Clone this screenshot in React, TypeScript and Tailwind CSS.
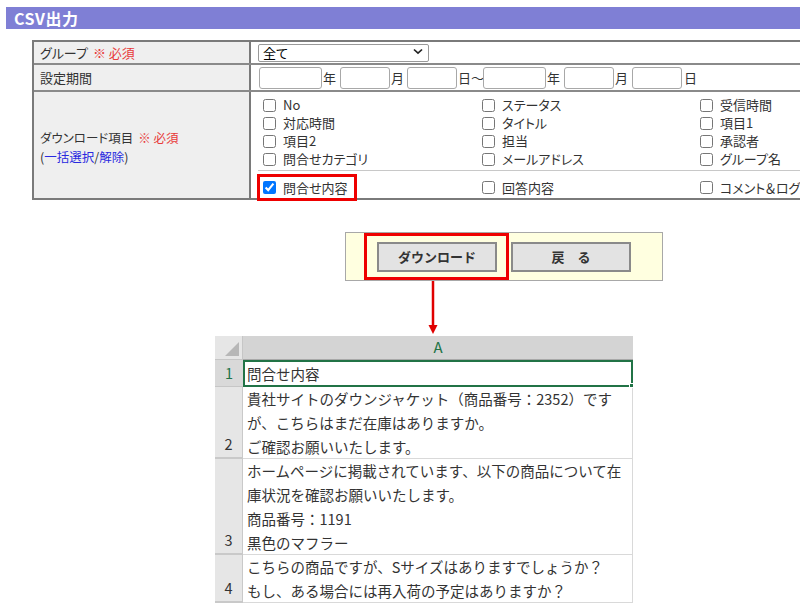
import React from 'react'

const jp = "font-['Noto_Sans_CJK_JP','Noto_Sans',sans-serif]"
const palt = "[font-feature-settings:'palt']"

const items = [
  ['No', 'ステータス', '受信時間'],
  ['対応時間', 'タイトル', '項目1'],
  ['項目2', '担当', '承認者'],
  ['問合せカテゴリ', 'メールアドレス', 'グループ名'],
]

const Check = ({ label, checked = false }: { label: string; checked?: boolean }) => (
  <label className="flex items-center h-[18px] text-[13px] text-[#333] whitespace-nowrap">
    <input type="checkbox" defaultChecked={checked} className="m-0 ml-[5px] mr-[7px] w-[13px] h-[13px] accent-[#0075ff]" />
    {label}
  </label>
)

const DateBox = ({ w }: { w: string }) => (
  <input type="text" className={`${w} h-[22px] border border-[#a8a8a8] rounded-[3px] bg-white`} />
)

const rows = [
  { n: '2', h: 'h-[72px]', lines: ['貴社サイトのダウンジャケット（商品番号：2352）です', 'が、こちらはまだ在庫はありますか。', 'ご確認お願いいたします。'] },
  { n: '3', h: 'h-[96px]', lines: ['ホームページに掲載されています、以下の商品について在', '庫状況を確認お願いいたします。', '商品番号：1191', '黒色のマフラー'] },
  { n: '4', h: 'h-[48px]', lines: ['こちらの商品ですが、Sサイズはありますでしょうか？', 'もし、ある場合には再入荷の予定はありますか？'] },
]

export default function App() {
  return (
    <div className={`w-[800px] h-[605px] overflow-hidden bg-white ${jp}`}>
      {/* title bar */}
      <div className="mt-[7px] ml-[6px] h-[22px] bg-[#7f7fd5] pl-[8px] flex items-center text-white font-bold text-[16px] tracking-[0.5px]">
        CSV出力
      </div>

      {/* form table */}
      <div className={`mt-[11px] ml-[32px] w-[790px] border-2 border-[#7a7a7a] text-[13px] text-[#333] ${palt}`}>
        <div className="flex h-[23px] border-b-2 border-[#8a8a8a]">
          <div className="w-[217px] shrink-0 bg-[#efefef] border-r-2 border-[#7a7a7a] pl-[6px] flex items-center">
            グループ<span className="ml-[5px] text-[#e83a3a]">※ 必須</span>
          </div>
          <div className="flex-1 pl-[7px] flex items-center">
            <div className="relative">
              <select className="appearance-none w-[171px] h-[18px] border border-[#999] rounded-[2px] pl-[4px] text-[13px] leading-[16px] bg-white text-black">
                <option>全て</option>
              </select>
              <svg className="absolute right-[6px] top-[5px] pointer-events-none" width="10" height="7" viewBox="0 0 10 7">
                <path d="M1 1.5 L5 5.2 L9 1.5" fill="none" stroke="#222" strokeWidth="1.7" />
              </svg>
            </div>
          </div>
        </div>
        <div className="flex h-[27px] border-b-2 border-[#8a8a8a]">
          <div className="w-[217px] shrink-0 bg-[#efefef] border-r-2 border-[#7a7a7a] pl-[6px] flex items-center">
            設定期間
          </div>
          <div className="flex-1 pl-[8px] flex items-center">
            <DateBox w="w-[63px]" /><span className="w-[18px] pl-[1px]">年</span>
            <DateBox w="w-[50px]" /><span className="w-[17px] pl-[1px]">月</span>
            <DateBox w="w-[50px]" /><span className="w-[26px] pl-[1px] whitespace-nowrap">日〜</span>
            <DateBox w="w-[63px]" /><span className="w-[18px] pl-[1px]">年</span>
            <DateBox w="w-[50px]" /><span className="w-[18px] pl-[1px]">月</span>
            <DateBox w="w-[50px]" /><span className="pl-[2px]">日</span>
          </div>
        </div>
        <div className="flex h-[106px]">
          <div className="w-[217px] shrink-0 bg-[#efefef] border-r-2 border-[#7a7a7a] pl-[6px] flex flex-col justify-center text-[12.5px] leading-[19px] pt-[4px]">
            <div>ダウンロード項目<span className="ml-[5px] text-[#e83a3a]">※ 必須</span></div>
            <div>(<span className="text-[#2a2ae0]">一括選択</span>/<span className="text-[#2a2ae0]">解除</span>)</div>
          </div>
          <div className="flex-1 pl-[7px] pt-[4px] flex flex-col">
            <div className="grid grid-cols-[219px_218px_200px]">
              {items.map((r) => r.map((t) => <Check key={t} label={t} />))}
            </div>
            <div className="mt-[2px] border-t border-[#c8c8c8] pt-[3px] grid grid-cols-[219px_218px_200px] items-center h-[30px]">
              <div className="w-[100px] h-[27px] border-[3px] border-[#ee0000] flex items-center -ml-[1px]">
                <label className="flex items-center text-[13px] text-[#333] whitespace-nowrap">
                  <input type="checkbox" defaultChecked className="m-0 ml-[3px] mr-[7px] w-[13px] h-[13px] accent-[#0075ff]" />
                  問合せ内容
                </label>
              </div>
              <Check label="回答内容" />
              <Check label="コメント＆ログ" />
            </div>
          </div>
        </div>
      </div>

      {/* buttons */}
      <div className="mt-[32px] ml-[345px] w-[318px] h-[49px] border border-[#a8a8a8] bg-[#ffffe0] flex">
        <div className="ml-[18px] w-[145px] h-[47px] border-[3px] border-[#ee0000] pl-[10px] pt-[6px]">
          <button className="w-[120px] h-[30px] border-2 border-[#8a8a8a] bg-[#e3e3e3] font-bold text-[13px] text-[#333]">
            ダウンロード
          </button>
        </div>
        <button className="ml-[2px] mt-[9px] w-[120px] h-[30px] border-2 border-[#8a8a8a] bg-[#e3e3e3] font-bold text-[13px] text-[#333]">
          戻　る
        </button>
      </div>

      {/* arrow */}
      <svg className="ml-[427px] block" width="12" height="55" viewBox="0 0 12 55">
        <line x1="6" y1="0" x2="6" y2="46" stroke="#e00000" strokeWidth="2.5" />
        <path d="M1.5 44 L10.5 44 L6 53 Z" fill="#e00000" />
      </svg>

      {/* spreadsheet */}
      <div className="ml-[215px] w-[418px] text-[14.5px] text-[#333]">
        <div className="flex h-[24px]">
          <div className="w-[28px] bg-[#e6e6e6] border-r border-b border-[#c6c6c6] relative">
            <svg className="absolute right-[3px] bottom-[3px]" width="14" height="14" viewBox="0 0 14 14">
              <path d="M14 0 L14 14 L0 14 Z" fill="#b7b7b7" />
            </svg>
          </div>
          <div className="flex-1 bg-[#d4d4d4] border-b border-[#a8a8a8] flex items-center justify-center text-[#217346] text-[15px]">
            A
          </div>
        </div>
        <div className="flex h-[27px]">
          <div className="w-[28px] bg-[#d9d9d9] border-b border-[#c6c6c6] flex items-center justify-center text-[#217346]">1</div>
          <div className="flex-1 border-2 border-[#217346] relative flex items-center pl-[2px] leading-[24px]">
            問合せ内容
            <div className="absolute -right-[3px] -bottom-[3px] w-[5px] h-[5px] bg-[#217346] border border-white" />
          </div>
        </div>
        {rows.map((r) => (
          <div key={r.n} className={`flex ${r.h}`}>
            <div className="w-[28px] bg-[#e6e6e6] border-b-2 border-r border-[#c9c9c9] flex items-end justify-center pb-[1px] leading-[24px]">{r.n}</div>
            <div className="flex-1 border-b border-r border-[#d9d9d9] pl-[4px] leading-[24px] whitespace-nowrap">
              {r.lines.map((l) => (
                <div key={l}>{l}</div>
              ))}
            </div>
          </div>
        ))}
      </div>
    </div>
  )
}
